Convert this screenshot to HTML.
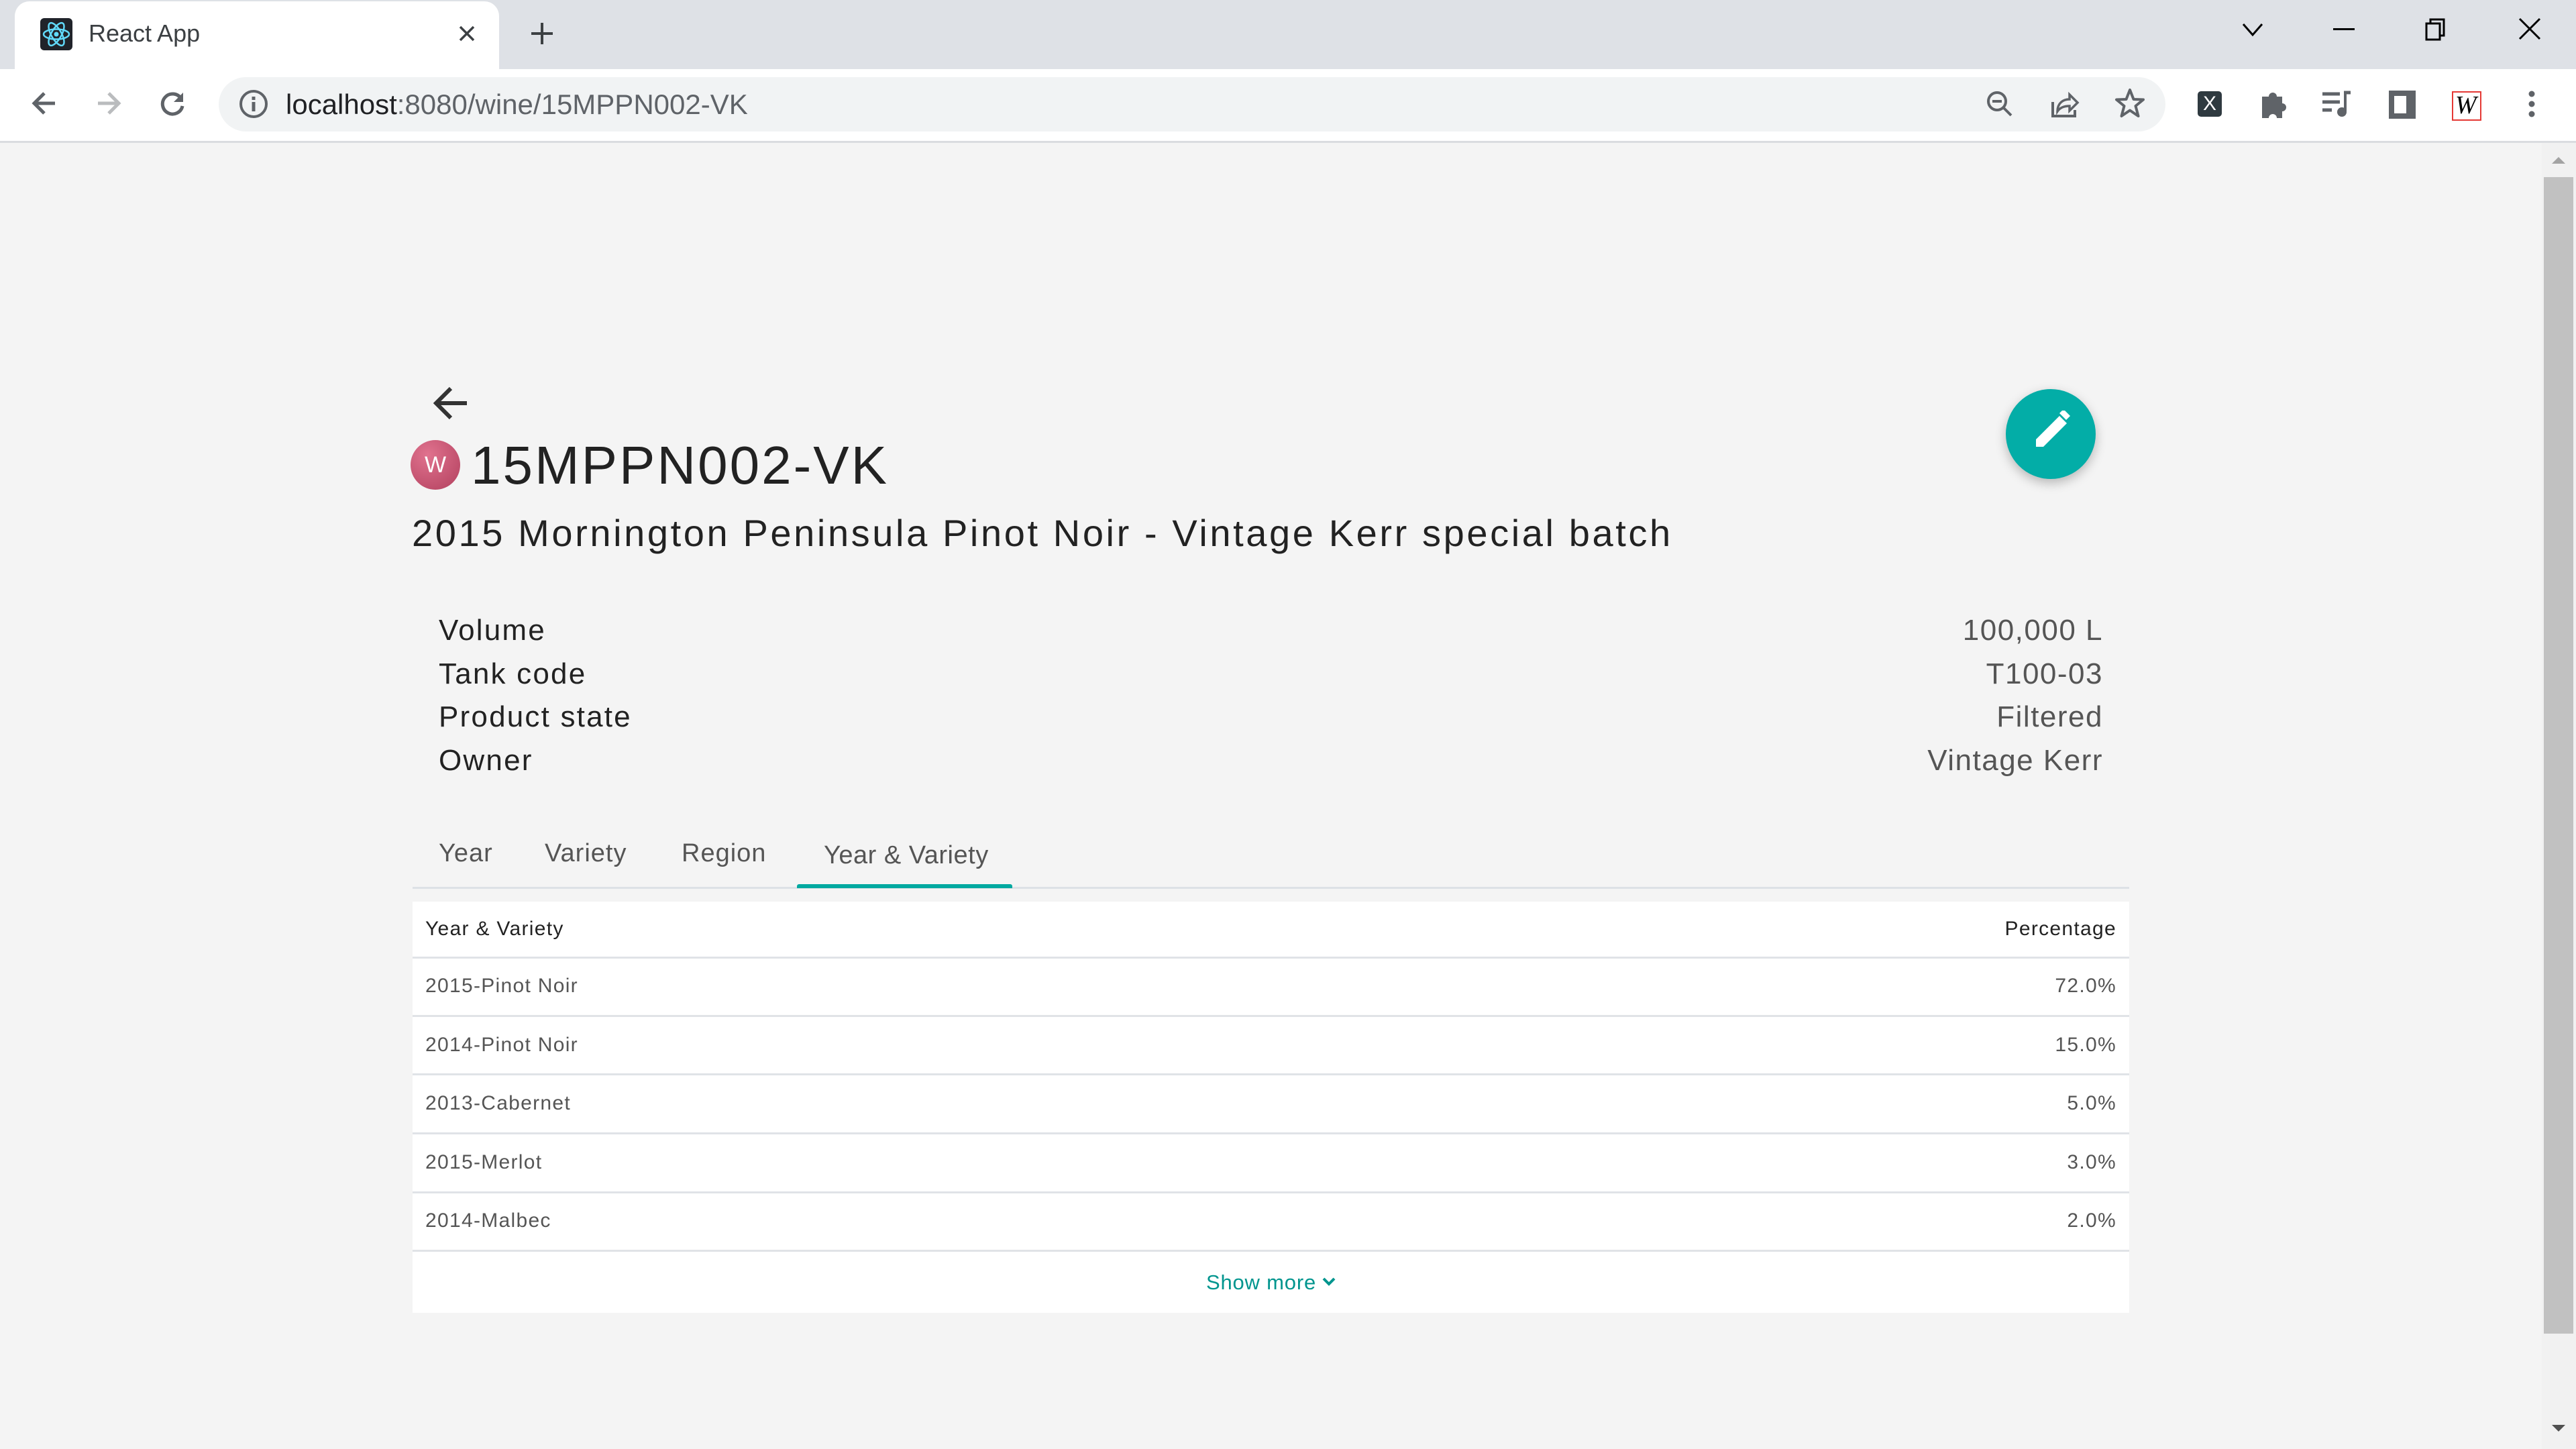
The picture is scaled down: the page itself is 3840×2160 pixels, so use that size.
<!DOCTYPE html>
<html><head><meta charset="utf-8"><style>
*{margin:0;padding:0;box-sizing:border-box}
body{width:3840px;height:2160px;overflow:hidden;background:#f4f4f4;font-family:"Liberation Sans",sans-serif;position:relative}
.a{position:absolute}
.t{white-space:nowrap;line-height:1}
.r{letter-spacing:1.3px}
</style></head><body>
<div class="a" style="left:0;top:0;width:3840px;height:103px;background:#dee1e6"></div>
<div class="a" style="left:22px;top:2px;width:722px;height:101px;background:#fff;border-radius:22px 22px 0 0"></div>
<svg class="a" style="left:60px;top:27px" width="48" height="48" viewBox="0 0 48 48"><rect width="48" height="48" rx="6" fill="#20232a"/><g fill="none" stroke="#61dafb" stroke-width="2.5"><ellipse cx="24" cy="24" rx="19" ry="7.5"/><ellipse cx="24" cy="24" rx="19" ry="7.5" transform="rotate(60 24 24)"/><ellipse cx="24" cy="24" rx="19" ry="7.5" transform="rotate(120 24 24)"/></g><circle cx="24" cy="24" r="3.5" fill="#61dafb"/></svg>
<div class="a t" style="left:132px;top:32px;font-size:36px;color:#3c4043">React App</div>
<svg class="a" style="left:682px;top:36px" width="28" height="28" viewBox="0 0 28 28"><path d="M4 4L24 24M24 4L4 24" stroke="#3c4043" stroke-width="3.5"/></svg>
<svg class="a" style="left:788px;top:30px" width="40" height="40" viewBox="0 0 40 40"><path d="M20 4V36M4 20H36" stroke="#3c4043" stroke-width="4"/></svg>
<svg class="a" style="left:3340px;top:32px" width="36" height="24" viewBox="0 0 36 24"><path d="M4 4L18 20L32 4" stroke="#000" stroke-width="3" fill="none"/></svg>
<div class="a" style="left:3478px;top:42px;width:32px;height:3px;background:#000"></div>
<svg class="a" style="left:3614px;top:26px" width="36" height="36" viewBox="0 0 36 36"><rect x="3" y="9" width="20" height="24" fill="none" stroke="#000" stroke-width="3"/><path d="M9 9V3H29V27H23" fill="none" stroke="#000" stroke-width="3"/></svg>
<svg class="a" style="left:3752px;top:24px" width="38" height="38" viewBox="0 0 38 38"><path d="M4 4L34 34M34 4L4 34" stroke="#000" stroke-width="3"/></svg>
<div class="a" style="left:0;top:103px;width:3840px;height:107px;background:#fff"></div>
<div class="a" style="left:0;top:210px;width:3840px;height:3px;background:#dadce0"></div>
<svg class="a" style="left:42px;top:130px" width="48" height="48" viewBox="0 0 48 48"><path d="M40 24H10M24 9L9 24L24 39" stroke="#5f6368" stroke-width="5" fill="none"/></svg>
<svg class="a" style="left:138px;top:130px" width="48" height="48" viewBox="0 0 48 48"><path d="M8 24H38M24 9L39 24L24 39" stroke="#babcbe" stroke-width="5" fill="none"/></svg>
<svg class="a" style="left:233px;top:130px" width="48" height="48" viewBox="0 0 48 48"><path d="M37 17A15 15 0 1 0 39 28" stroke="#5f6368" stroke-width="5" fill="none"/><path d="M40 8V22H26Z" fill="#5f6368"/></svg>
<div class="a" style="left:326px;top:115px;width:2902px;height:81px;background:#f1f3f4;border-radius:41px"></div>
<svg class="a" style="left:355px;top:132px" width="46" height="46" viewBox="0 0 46 46"><circle cx="23" cy="23" r="19" fill="none" stroke="#5f6368" stroke-width="4"/><rect x="20.5" y="20" width="5" height="14" fill="#5f6368"/><rect x="20.5" y="12" width="5" height="5" fill="#5f6368"/></svg>
<div class="a t" style="left:426px;top:135px;font-size:42px;color:#202124">localhost<span style="color:#5f6368">:8080/wine/15MPPN002-VK</span></div>
<svg class="a" style="left:2958px;top:132px" width="46" height="46" viewBox="0 0 46 46"><circle cx="19" cy="19" r="13" fill="none" stroke="#5f6368" stroke-width="4"/><path d="M12 19H26M28 28L40 40" stroke="#5f6368" stroke-width="4"/></svg>
<svg class="a" style="left:3055px;top:132px" width="46" height="46" viewBox="0 0 46 46"><path d="M5 20V41H38V32" fill="none" stroke="#5f6368" stroke-width="4"/><path d="M12 34C12 22 20 16 30 16V9L42 21L30 33V26C22 26 16 28 12 34Z" fill="none" stroke="#5f6368" stroke-width="3.5"/></svg>
<svg class="a" style="left:3151px;top:130px" width="48" height="48" viewBox="0 0 48 48"><path d="M24 4L29.5 18L44 18.5L32.5 28L36.5 43L24 34.5L11.5 43L15.5 28L4 18.5L18.5 18Z" fill="none" stroke="#5f6368" stroke-width="4" stroke-linejoin="round"/></svg>
<div class="a" style="left:3276px;top:136px;width:36px;height:38px;background:#2f3a40;border-radius:5px;color:#fff;font-size:30px;text-align:center;line-height:38px">X</div>
<svg class="a" style="left:3366px;top:132px" width="46" height="46" viewBox="0 0 46 46"><path d="M6 12H16A6 6 0 0 1 28 12H36V22A6 6 0 0 1 36 34V44H28A6 6 0 0 0 16 44H6Z" fill="#5f6368"/></svg>
<svg class="a" style="left:3460px;top:134px" width="46" height="42" viewBox="0 0 46 42"><path d="M2 6H28M2 18H28M2 30H16" stroke="#5f6368" stroke-width="5"/><path d="M36 4V32" stroke="#5f6368" stroke-width="4"/><path d="M34 4H44" stroke="#5f6368" stroke-width="5"/><circle cx="31" cy="33" r="7" fill="#5f6368"/></svg>
<div class="a" style="left:3561px;top:135px;width:40px;height:42px;border:8px solid #5f6368;border-right-width:14px;background:#fff"></div>
<div class="a" style="left:3655px;top:136px;width:44px;height:44px;border:2px solid #e53935"></div>
<div class="a t" style="left:3660px;top:138px;font-size:38px;font-style:italic;font-family:'Liberation Serif',serif;color:#000">W</div>
<svg class="a" style="left:3760px;top:132px" width="28" height="46" viewBox="0 0 28 46"><circle cx="14" cy="8" r="4.5" fill="#5f6368"/><circle cx="14" cy="23" r="4.5" fill="#5f6368"/><circle cx="14" cy="38" r="4.5" fill="#5f6368"/></svg>
<div class="a" style="left:3789px;top:213px;width:51px;height:1947px;background:#f1f1f1"></div>
<div class="a" style="left:3792px;top:264px;width:44px;height:1724px;background:#c1c1c1"></div>
<svg class="a" style="left:3800px;top:228px" width="28" height="20"><path d="M4 16L14 6L24 16Z" fill="#a3a3a3"/></svg>
<svg class="a" style="left:3800px;top:2120px" width="28" height="20"><path d="M4 4L14 14L24 4Z" fill="#505050"/></svg>
<svg class="a" style="left:640px;top:570px" width="62" height="62" viewBox="0 0 62 62"><path d="M56 31H12M32 9L10 31L32 53" stroke="#333" stroke-width="6" fill="none"/></svg>
<div class="a" style="left:612px;top:656px;width:74px;height:74px;border-radius:50%;background:radial-gradient(circle at 35% 30%,#e0728e,#b2405e)"></div>
<div class="a t" style="left:612px;top:676px;width:74px;text-align:center;font-size:34px;color:#fff">W</div>
<div class="a t" style="left:702px;top:654px;font-size:80px;color:#222;letter-spacing:3px">15MPPN002-VK</div>
<div class="a t" style="left:614px;top:767px;font-size:56px;color:#222;letter-spacing:3.6px">2015 Mornington Peninsula Pinot Noir - Vintage Kerr special batch</div>
<div class="a t" style="left:654px;top:908px;font-size:44px;color:#222;line-height:64.5px;white-space:pre;letter-spacing:2.2px">Volume
Tank code
Product state
Owner</div>
<div class="a t" style="right:705px;top:908px;font-size:44px;color:#555;line-height:64.5px;text-align:right;white-space:pre;letter-spacing:1.5px">100,000 L
T100-03
Filtered
Vintage Kerr</div>
<div class="a t" style="left:654px;top:1253px;font-size:38px;color:#555;letter-spacing:1px">Year</div>
<div class="a t" style="left:812px;top:1253px;font-size:38px;color:#555;letter-spacing:1px">Variety</div>
<div class="a t" style="left:1016px;top:1253px;font-size:38px;color:#555;letter-spacing:1px">Region</div>
<div class="a t" style="left:1228px;top:1256px;font-size:38px;color:#555;letter-spacing:0.5px">Year &amp; Variety</div>
<div class="a" style="left:615px;top:1322px;width:2559px;height:3px;background:#dde1e6"></div>
<div class="a" style="left:1188px;top:1318px;width:321px;height:6px;background:#00a9a0;border-radius:3px 3px 0 0"></div>
<div class="a" style="left:615px;top:1344px;width:2559px;height:613px;background:#fff"></div>
<div class="a t r" style="left:634px;top:1370px;font-size:30px;color:#222">Year &amp; Variety</div>
<div class="a t r" style="right:685px;top:1370px;font-size:30px;color:#222">Percentage</div>
<div class="a" style="left:615px;top:1426px;width:2559px;height:3px;background:#e0e3e7"></div>
<div class="a t r" style="left:634px;top:1455px;font-size:30px;color:#555">2015-Pinot Noir</div><div class="a t r" style="right:685px;top:1455px;font-size:30px;color:#555">72.0%</div>
<div class="a" style="left:615px;top:1513px;width:2559px;height:3px;background:#e0e3e7"></div>
<div class="a t r" style="left:634px;top:1543px;font-size:30px;color:#555">2014-Pinot Noir</div><div class="a t r" style="right:685px;top:1543px;font-size:30px;color:#555">15.0%</div>
<div class="a" style="left:615px;top:1600px;width:2559px;height:3px;background:#e0e3e7"></div>
<div class="a t r" style="left:634px;top:1630px;font-size:30px;color:#555">2013-Cabernet</div><div class="a t r" style="right:685px;top:1630px;font-size:30px;color:#555">5.0%</div>
<div class="a" style="left:615px;top:1688px;width:2559px;height:3px;background:#e0e3e7"></div>
<div class="a t r" style="left:634px;top:1718px;font-size:30px;color:#555">2015-Merlot</div><div class="a t r" style="right:685px;top:1718px;font-size:30px;color:#555">3.0%</div>
<div class="a" style="left:615px;top:1776px;width:2559px;height:3px;background:#e0e3e7"></div>
<div class="a t r" style="left:634px;top:1805px;font-size:30px;color:#555">2014-Malbec</div><div class="a t r" style="right:685px;top:1805px;font-size:30px;color:#555">2.0%</div>
<div class="a" style="left:615px;top:1863px;width:2559px;height:3px;background:#e0e3e7"></div>
<div class="a t" style="left:1798px;top:1896px;font-size:31px;color:#00958e;letter-spacing:0.8px">Show more</div>
<svg class="a" style="left:1970px;top:1902px" width="22" height="16" viewBox="0 0 22 16"><path d="M3 4L11 12L19 4" stroke="#00958e" stroke-width="4" fill="none"/></svg>
<div class="a" style="left:2990px;top:580px;width:134px;height:134px;border-radius:50%;background:#03ada7;box-shadow:0 6px 16px rgba(0,0,0,0.25)"></div>
<svg class="a" style="left:3020px;top:612px" width="72" height="72" viewBox="0 0 72 72"><path d="M15 66V55L50 20L61 31L26 66Z" fill="#fff" transform="translate(0,-12)"/><path d="M54 16L60 10L70 20L64 26Z" fill="#fff" transform="translate(-4,-12)"/></svg>
</body></html>
